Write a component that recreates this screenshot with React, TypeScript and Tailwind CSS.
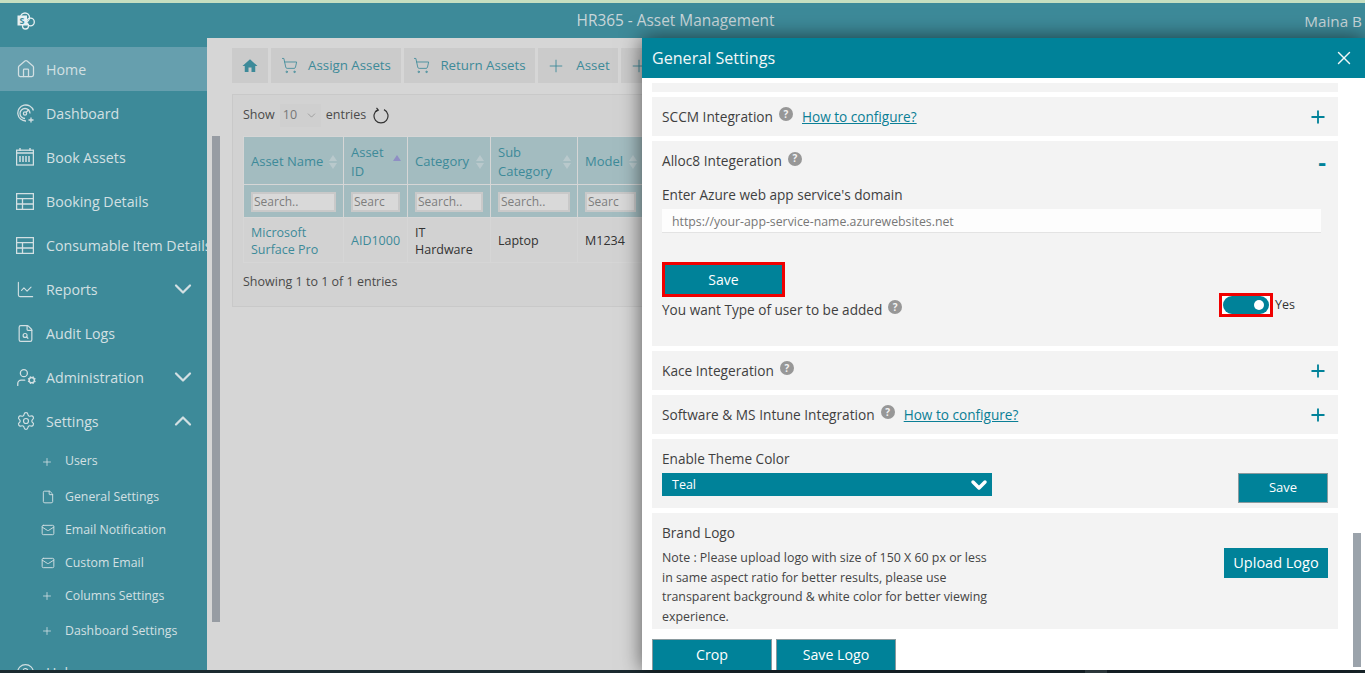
import { ChartLine, ChevronDown, ChevronUp, CircleHelp, File, FileSearch, Home, Mail, Plus, Settings, ShoppingCart, UserCog, X } from 'lucide-react';
import type { ReactNode } from 'react';

const font = { fontFamily: '"Open Sans", "Noto Sans", sans-serif' };

function GaugeIcon() {
  return (
    <svg width="19" height="19" viewBox="0 0 19 19" fill="none" stroke="currentColor" strokeWidth="1.3">
      <path d="M10 17a8 8 0 1 1 7.4-10.5" />
      <path d="M9 14.5a5 5 0 1 1 5-5" />
      <circle cx="9" cy="9.5" r="1.6" />
      <path d="M10 8.5l3-3M15 13.5v5M12.5 16h5" />
    </svg>
  );
}

function CalendarIcon() {
  return (
    <svg width="18" height="18" viewBox="0 0 18 18" fill="none" stroke="currentColor" strokeWidth="1.3">
      <rect x="0.6" y="2.2" width="16.8" height="14.8" />
      <path d="M4 0v3M14 0v3M0.6 5h16.8" strokeWidth="1.4" />
      <path d="M4 8v6M7 8v6M10 8v6M13 8v6" strokeWidth="1.5" />
    </svg>
  );
}

function TableIcon() {
  return (
    <svg width="18" height="17" viewBox="0 0 18 17" fill="none" stroke="currentColor" strokeWidth="1.3">
      <rect x="0.6" y="0.6" width="16.8" height="15.8" />
      <path d="M0.6 5.6h16.8M0.6 11h16.8M6.5 5.6v10.8" />
    </svg>
  );
}

function RefreshIcon() {
  return (
    <svg width="16" height="17" viewBox="0 0 16 17" fill="none" stroke="#333" strokeWidth="1.2" className="ml-[7px]">
      <path d="M5 2.6a7 7 0 1 0 6 0" />
      <path d="M3.5 0.8L5.3 3 3 4.4" />
    </svg>
  );
}

function SharePointLogo() {
  return (
    <svg width="18" height="18" viewBox="0 0 18 18" fill="none">
      <circle cx="8" cy="5.5" r="4.5" stroke="#e8f0f2" strokeWidth="1.3" />
      <circle cx="13.5" cy="10" r="3.8" stroke="#e8f0f2" strokeWidth="1.3" />
      <circle cx="8.5" cy="14" r="3" stroke="#e8f0f2" strokeWidth="1.3" />
      <rect x="0.5" y="3.5" width="9.5" height="10" fill="#e8f0f2" />
      <text x="2.6" y="11.6" fontSize="9" fontWeight="700" fill="#3d8a99" fontFamily="Open Sans">S</text>
    </svg>
  );
}

function HomeFilled() {
  return (
    <svg width="18" height="18" viewBox="0 0 24 24" fill="#3d8a99">
      <path d="M10 20v-6h4v6h5v-8h3L12 3 2 12h3v8z" />
    </svg>
  );
}

function NavRow({ icon, label, chevron, active }: { icon: ReactNode; label: string; chevron?: 'up' | 'down'; active?: boolean }) {
  return (
    <div className={`relative flex h-11 shrink-0 items-center pl-[16px] whitespace-nowrap ${active ? 'bg-[#669fae]' : ''}`}>
      <span className="flex w-[30px] shrink-0 items-center">{icon}</span>
      <span className="pt-[1px] text-[14.2px]">{label}</span>
      {chevron === 'down' && <ChevronDown size={28} strokeWidth={1.9} className="absolute right-[10px]" />}
      {chevron === 'up' && <ChevronUp size={28} strokeWidth={1.9} className="absolute right-[10px]" />}
    </div>
  );
}

function SubRow({ icon, label, height }: { icon: ReactNode; label: string; height: string }) {
  return (
    <div className={`flex shrink-0 items-center pl-[41px] text-[12.3px] whitespace-nowrap ${height}`}>
      <span className="flex w-[24px] shrink-0 items-center">{icon}</span>
      {label}
    </div>
  );
}

function Sidebar() {
  return (
    <aside className="flex h-full w-[207px] shrink-0 flex-col overflow-hidden bg-[#3d8a99] pt-[9px] text-[#d3e0e3]">
      <NavRow active icon={<Home size={20} strokeWidth={1.5} />} label="Home" />
      <NavRow icon={<GaugeIcon />} label="Dashboard" />
      <NavRow icon={<CalendarIcon />} label="Book Assets" />
      <NavRow icon={<TableIcon />} label="Booking Details" />
      <NavRow icon={<TableIcon />} label="Consumable Item Details" />
      <NavRow icon={<ChartLine size={19} strokeWidth={1.4} />} label="Reports" chevron="down" />
      <NavRow icon={<FileSearch size={19} strokeWidth={1.5} />} label="Audit Logs" />
      <NavRow icon={<UserCog size={21} strokeWidth={1.5} />} label="Administration" chevron="down" />
      <NavRow icon={<Settings size={20} strokeWidth={1.4} />} label="Settings" chevron="up" />
      <SubRow height="h-[37px]" icon={<Plus size={12} strokeWidth={1.6} />} label="Users" />
      <SubRow height="h-[34px]" icon={<File size={14} strokeWidth={1.6} />} label="General Settings" />
      <SubRow height="h-[32px]" icon={<Mail size={14} strokeWidth={1.6} />} label="Email Notification" />
      <SubRow height="h-[34px]" icon={<Mail size={14} strokeWidth={1.6} />} label="Custom Email" />
      <SubRow height="h-[32px]" icon={<Plus size={12} strokeWidth={1.6} />} label="Columns Settings" />
      <SubRow height="h-[38px]" icon={<Plus size={12} strokeWidth={1.6} />} label="Dashboard Settings" />
      <NavRow icon={<CircleHelp size={19} strokeWidth={1.5} />} label="Help" />
    </aside>
  );
}

function ToolButton({ icon, label, width }: { icon: ReactNode; label?: string; width: string }) {
  return (
    <div className={`flex h-[35px] shrink-0 items-center justify-center gap-[10px] bg-[#cbcbcb] text-[13.3px] text-[#3d8a99] ${width}`}>
      {icon}
      {label}
    </div>
  );
}

function SortArrows({ active }: { active?: boolean }) {
  return (
    <span className="ml-auto flex shrink-0 flex-col gap-[2px]">
      <span className={`h-0 w-0 border-x-[4px] border-b-[6px] border-x-transparent ${active ? 'border-b-[#8f8fc4]' : 'border-b-[#b9c9cc]'}`} />
      <span className={`h-0 w-0 border-x-[4px] border-t-[6px] border-x-transparent ${active ? 'border-t-transparent' : 'border-t-[#b9c9cc]'}`} />
    </span>
  );
}

function HeadCell({ label, active }: { label: string; active?: boolean }) {
  return (
    <th className="border border-[#d6d6d6] pt-[2px] pr-[6px] pl-[7px] text-left font-normal">
      <div className="flex items-center leading-[19px]">
        <span>{label}</span>
        <SortArrows active={active} />
      </div>
    </th>
  );
}

function SearchCell({ placeholder }: { placeholder: string }) {
  return (
    <td className="border border-[#d6d6d6] px-[7px] pt-[2px]">
      <div className="flex h-[20px] items-center overflow-hidden border-2 border-[#c9c9c9] bg-[#d9d9d9] pl-[1px] text-[12px] whitespace-nowrap text-[#7d7d7d]">
        {placeholder}
      </div>
    </td>
  );
}

function MainArea() {
  return (
    <main className="flex h-full flex-1 overflow-hidden bg-[#d6d6d6]">
      <div className="flex h-full w-[25px] shrink-0 flex-col pt-[98px] pl-[5px]">
        <div className="h-[486px] w-[8px] bg-[#979ca3]" />
      </div>
      <div className="flex-1 pt-[10px]">
        <div className="flex gap-[3px]">
          <ToolButton width="w-[36px]" icon={<HomeFilled />} />
          <ToolButton width="w-[130px]" icon={<ShoppingCart size={17} strokeWidth={1.2} />} label="Assign Assets" />
          <ToolButton width="w-[131px]" icon={<ShoppingCart size={17} strokeWidth={1.2} />} label="Return Assets" />
          <ToolButton width="w-[80px]" icon={<Plus size={20} strokeWidth={1.1} />} label="Asset" />
          <ToolButton width="w-[80px]" icon={<Plus size={20} strokeWidth={1.1} />} label="Asset" />
        </div>
        <div className="mt-[11px] h-[213px] w-[1100px] border border-[#c9c9c9] bg-[#d2d2d2] pl-[10px] text-[12.5px] text-[#4a4a4a]">
          <div className="flex h-[41px] items-center">
            Show
            <span className="mx-[5px] flex h-[23px] w-[41px] items-center justify-between bg-[#cfcfcf] pr-[3px] pl-[3px] text-[#777]">
              10 <ChevronDown size={13} strokeWidth={1} />
            </span>
            entries
            <RefreshIcon />
          </div>
          <table className="w-[800px] table-fixed border-collapse text-[13px]">
            <colgroup>
              <col className="w-[100px]" />
              <col className="w-[64px]" />
              <col className="w-[83px]" />
              <col className="w-[87px]" />
              <col className="w-[66px]" />
              <col />
            </colgroup>
            <thead className="bg-[#a3bcc0] text-[#3d8a99]">
              <tr className="h-[48px]">
                <HeadCell label="Asset Name" />
                <HeadCell label="Asset ID" active />
                <HeadCell label="Category" />
                <HeadCell label="Sub Category" />
                <HeadCell label="Model" />
                <HeadCell label="Status" />
              </tr>
              <tr className="h-[33px]">
                <SearchCell placeholder="Search.." />
                <SearchCell placeholder="Searc" />
                <SearchCell placeholder="Search.." />
                <SearchCell placeholder="Search.." />
                <SearchCell placeholder="Searc" />
                <SearchCell placeholder="Search.." />
              </tr>
            </thead>
            <tbody className="leading-[17px]">
              <tr className="h-[45px]">
                <td className="border border-[#d6d6d6] px-[7px] pt-[2px] text-[12.5px] text-[#3d8a99]">Microsoft Surface Pro</td>
                <td className="border border-[#d6d6d6] px-[7px] text-[12.5px] text-[#3d8a99]">AID1000</td>
                <td className="border border-[#d6d6d6] px-[7px] pt-[2px] text-[12.5px] text-[#333]">IT Hardware</td>
                <td className="border border-[#d6d6d6] px-[7px] text-[12.5px] text-[#333]">Laptop</td>
                <td className="border border-[#d6d6d6] px-[7px] text-[12.5px] text-[#333]">M1234</td>
                <td className="border border-[#d6d6d6] px-[7px]" />
              </tr>
            </tbody>
          </table>
          <div className="mt-[10px] text-[12.5px]">Showing 1 to 1 of 1 entries</div>
        </div>
      </div>
    </main>
  );
}

function Help() {
  return (
    <span className="mb-[6px] ml-[6px] flex h-[14px] w-[14px] shrink-0 items-center justify-center rounded-full bg-[#979797] text-[10px] font-bold text-[#f3f3f3]">
      ?
    </span>
  );
}

function HowTo() {
  return <span className="ml-[9px] text-[13.6px] font-medium text-[#0b7f96] underline">How to configure?</span>;
}

function AccordionRow({ title, children }: { title: string; children?: ReactNode }) {
  return (
    <div className="flex h-[39px] shrink-0 items-center bg-[#f3f3f3] pt-[1px] pr-[10px] pl-[10px] text-[13.7px] font-medium text-[#3f3f3f]">
      {title}
      <Help />
      {children}
      <Plus size={20} strokeWidth={2.2} className="ml-auto text-[#008299]" />
    </div>
  );
}

function SettingsPanel() {
  return (
    <section style={font} className="absolute top-[38px] right-0 bottom-[3px] flex w-[723px] flex-col overflow-hidden bg-white shadow-[0_0_20px_rgba(0,0,0,0.6)]">
      <header className="flex h-[40px] shrink-0 items-center justify-between bg-[#008299] pr-[10px] pl-[10px] text-[16.1px] text-[#f2f7f8]">
        General Settings
        <X size={22} strokeWidth={1.5} />
      </header>
      <div className="flex min-h-0 flex-1">
        <div className="flex w-[696px] shrink-0 flex-col gap-[5px] pt-[5px] pl-[10px]">
          <div className="h-[9px] shrink-0 bg-[#f3f3f3]" />
          <AccordionRow title="SCCM Integration">
            <HowTo />
          </AccordionRow>
          <div className="h-[205px] shrink-0 bg-[#f3f3f3] pt-[10px] pr-[17px] pl-[10px] text-[13.7px] font-medium text-[#3f3f3f]">
            <div className="flex h-[20px] items-center pt-[1px]">
              Alloc8 Integeration
              <Help />
              <span className="-mr-[5px] ml-auto text-[24px] font-bold text-[#008299]">-</span>
            </div>
            <div className="mt-[14px] text-[13.6px] leading-[20px]">Enter Azure web app service's domain</div>
            <div className="mt-[4px] flex h-[24px] items-center border-b border-[#e3e3e3] bg-[#fdfdfd] pt-[3px] pl-[10px] text-[12.3px] font-normal text-[#777]">
              https://your-app-service-name.azurewebsites.net
            </div>
            <div className="mt-[29px] flex h-[35px] w-[123px] items-center justify-center border-[3px] border-[#f00000] bg-[#008299] text-[14px] font-normal text-white">
              Save
            </div>
            <div className="flex items-start justify-between pr-[26px]">
              <div className="mt-[3px] flex items-center text-[13.6px]">
                You want Type of user to be added
                <Help />
              </div>
              <div className="-mt-[4px] flex items-center gap-[2px] text-[12.5px] font-normal text-[#333]">
                <span className="flex h-[24px] w-[54px] items-center justify-center border-[3px] border-[#f00000] bg-white">
                  <span className="flex h-[18px] w-[46px] items-center justify-end rounded-full bg-[#008299] pr-[5px]">
                    <span className="h-[10px] w-[10px] rounded-full bg-white" />
                  </span>
                </span>
                Yes
              </div>
            </div>
          </div>
          <AccordionRow title="Kace Integeration" />
          <AccordionRow title="Software & MS Intune Integration">
            <HowTo />
          </AccordionRow>
          <div className="h-[69px] shrink-0 bg-[#f3f3f3] pt-[10px] pr-[10px] pl-[10px] text-[13.6px] font-medium text-[#3f3f3f]">
            <div className="leading-[20px]">Enable Theme Color</div>
            <div className="mt-[4px] flex items-start justify-between">
              <div className="flex h-[23px] w-[330px] items-center justify-between bg-[#008299] pt-[1px] pr-[1px] pl-[10px] text-[12.5px] font-normal text-white">
                Teal
                <ChevronDown size={24} strokeWidth={3.5} className="-my-[2px]" />
              </div>
              <div className="flex h-[30px] w-[90px] items-center justify-center border border-[#8a9a9e] bg-[#008299] text-[13px] font-normal text-white">
                Save
              </div>
            </div>
          </div>
          <div className="flex h-[116px] shrink-0 bg-[#f3f3f3] pt-[10px] pr-[10px] pl-[10px]">
            <div className="w-[330px] text-[12.4px] leading-[19.5px] text-[#444]">
              <div className="text-[13.6px] leading-[20px] font-medium text-[#3f3f3f]">Brand Logo</div>
              <p className="mt-[5px]">
                Note : Please upload logo with size of 150 X 60 px or less in same aspect ratio for better results, please use transparent background &amp; white color for better viewing experience.
              </p>
            </div>
            <div className="mt-[25px] ml-auto flex h-[30px] w-[104px] items-center justify-center bg-[#008299] text-[14.5px] text-white">
              Upload Logo
            </div>
          </div>
          <div className="mt-[5px] flex gap-[4px]">
            <div className="flex h-[32px] w-[120px] items-center justify-center border border-[#8a9a9e] bg-[#008299] text-[14.2px] text-white">Crop</div>
            <div className="flex h-[32px] w-[120px] items-center justify-center border border-[#8a9a9e] bg-[#008299] text-[14.2px] text-white">Save Logo</div>
          </div>
        </div>
        <div className="ml-[15px] flex flex-col pt-[455px]">
          <div className="h-[134px] w-[8px] bg-[#9ba3ab]" />
        </div>
      </div>
    </section>
  );
}

export default function App() {
  return (
    <div style={font} className="relative flex h-[673px] w-[1365px] flex-col overflow-hidden bg-[#d6d6d6]">
      <div className="h-[3px] shrink-0 bg-[#c6dfc0]" />
      <header className="flex h-[35px] shrink-0 items-center bg-[#3d8a99] pr-[3px] pl-[17px] text-[#c9d6d9]">
        <SharePointLogo />
        <div className="flex-1 pl-[12px] text-center text-[15.4px]">HR365 - Asset Management</div>
        <div className="pt-[2px] text-[15.3px]">Maina B</div>
      </header>
      <div className="flex min-h-0 flex-1">
        <Sidebar />
        <MainArea />
      </div>
      <div className="flex h-[3px] shrink-0 bg-[#1b2a30]">
        <div className="w-[1085px]" />
        <div className="w-[22px] bg-[#3b4a50]" />
      </div>
      <SettingsPanel />
    </div>
  );
}
